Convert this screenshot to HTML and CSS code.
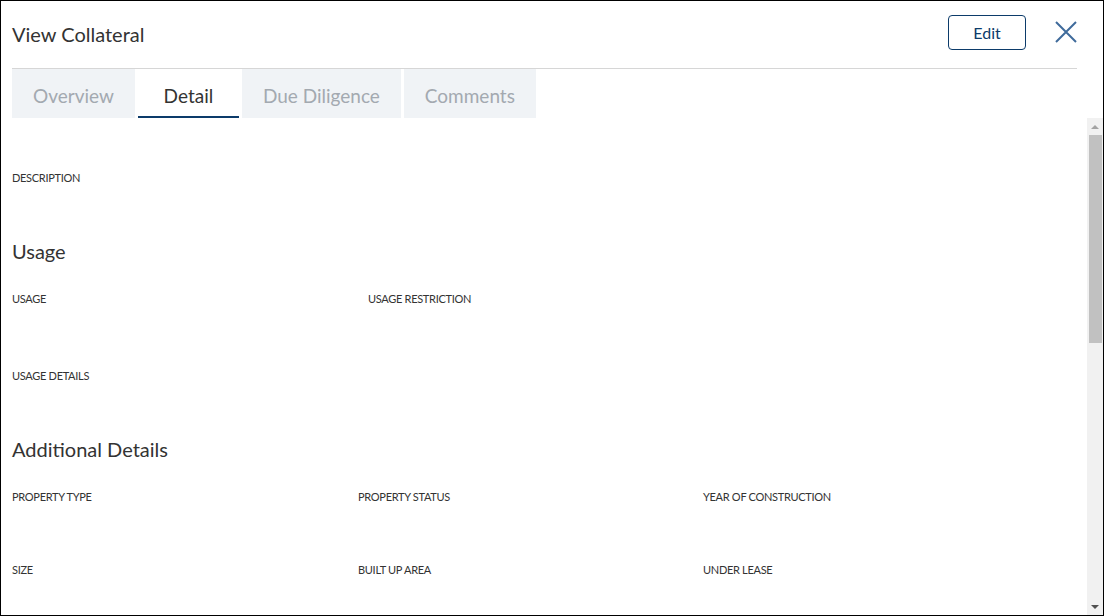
FILE: index.html
```html
<!DOCTYPE html>
<html lang="en">
<head>
    <meta charset="UTF-8">
    <title>View Collateral</title>
    <link rel="stylesheet" href="styles.css">
</head>
<body>

    <div class="modal">

        <!-- Header -->
        <div class="modal-head">
            <h1 class="modal-title">View Collateral</h1>
            <button class="btn-edit" type="button">Edit</button>
            <button class="btn-close" type="button" aria-label="Close">
                <svg width="22" height="22" viewBox="0 0 22 22">
                    <path d="M1 1 L21 21 M21 1 L1 21" stroke="#3f6b9b" stroke-width="2" fill="none"/>
                </svg>
            </button>
        </div>

        <!-- Tabs -->
        <ul class="tabs">
            <li class="tab">Overview</li>
            <li class="tab active">Detail</li>
            <li class="tab">Due Diligence</li>
            <li class="tab">Comments</li>
        </ul>

        <!-- Body -->
        <div class="modal-body">
            <div class="content">
                <div class="field">DESCRIPTION</div>

                <h2 class="section-title">Usage</h2>
                <div class="grid grid-usage">
                    <div class="field">USAGE</div>
                    <div class="field">USAGE RESTRICTION</div>
                    <div class="field">USAGE DETAILS</div>
                </div>

                <h2 class="section-title">Additional Details</h2>
                <div class="grid grid-details">
                    <div class="field">PROPERTY TYPE</div>
                    <div class="field">PROPERTY STATUS</div>
                    <div class="field">YEAR OF CONSTRUCTION</div>
                    <div class="field">SIZE</div>
                    <div class="field">BUILT UP AREA</div>
                    <div class="field">UNDER LEASE</div>
                </div>
            </div>

            <!-- fake scrollbar -->
            <div class="scrollbar">
                <div class="sb-btn"><span class="arrow-up"></span></div>
                <div class="sb-track"><div class="sb-thumb"></div></div>
                <div class="sb-btn"><span class="arrow-down"></span></div>
            </div>
        </div>

    </div>

</body>
</html>
```

FILE: styles.css
```css
/* Base */
body { margin: 0; font-family: Lato, "Noto Sans", sans-serif; color: #333; background: #fff; }
h1, h2, ul { margin: 0; padding: 0; font-weight: normal; }

.modal { width: 1104px; height: 616px; box-sizing: border-box; border: 1px solid #000; display: flex; flex-direction: column; overflow: hidden; }

/* Header */
.modal-head { height: 68px; margin: 0 26px 0 11px; border-bottom: 1px solid #d6d6d6; display: flex; align-items: center; }
.modal-title { font-size: 20px; color: #333; flex-grow: 1; margin-top: -1px; }
.btn-edit { width: 78px; height: 35px; margin-top: -4px; border: 1px solid #0c3b6a; border-radius: 4px; background: #fff; color: #0c3b6a; font-family: inherit; font-size: 16px; padding: 0; cursor: pointer; }
.btn-close { width: 22px; height: 22px; margin: -6px 0 0 29px; padding: 0; border: none; background: none; cursor: pointer; }
.btn-close svg { display: block; }

/* Tabs */
.tabs { list-style: none; display: flex; gap: 3px; margin-left: 11px; height: 50px; }
.tab { background: #f0f3f6; color: #a3a9b0; font-size: 19px; padding: 3px 21px 0; min-width: 101px; display: flex; align-items: center; justify-content: center; box-sizing: border-box; }
.tab.active { background: #fff; color: #333; border-bottom: 2px solid #0c3b6a; padding-top: 5px; }

/* Body */
.modal-body { flex-grow: 1; display: flex; min-height: 0; }
.content { flex-grow: 1; padding: 53px 0 0 11px; }

.field { font-size: 11px; line-height: 14px; letter-spacing: -0.3px; height: 59px; text-transform: uppercase; color: #333; }
.section-title { font-size: 20px; line-height: 28px; margin: 7px 0 27px; color: #333; }

.grid { display: grid; }
.grid-usage { grid-template-columns: 356px 356px; row-gap: 18px; }
.grid-usage .field:nth-child(3) { grid-column: 1; }
.grid-details { grid-template-columns: 346px 345px 345px; row-gap: 14px; }

/* Scrollbar */
.scrollbar { width: 16px; background: #f1f1f1; display: flex; flex-direction: column; }
.sb-btn { height: 17px; display: flex; align-items: center; justify-content: center; }
.sb-track { flex-grow: 1; padding: 0 1px 0 2px; }
.sb-thumb { height: 208px; background: #c1c1c1; }
.arrow-up { width: 0; height: 0; border-left: 4px solid transparent; border-right: 4px solid transparent; border-bottom: 4px solid #a3a3a3; }
.arrow-down { width: 0; height: 0; border-left: 4px solid transparent; border-right: 4px solid transparent; border-top: 4px solid #505050; }
```
